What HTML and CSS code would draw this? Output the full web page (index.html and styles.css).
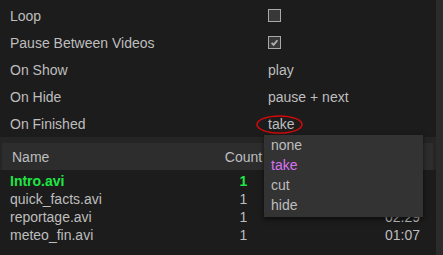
FILE: index.html
```html
<!DOCTYPE html>
<html lang="en">
<head>
    <meta charset="UTF-8">
    <title>Playlist Settings</title>
    <link rel="stylesheet" href="styles.css">
</head>
<body>
    <div class="main">
        <!--settings-->
        <div class="settings">
            <div class="row"><span class="label">Loop</span><span class="value"><span class="check"></span></span></div>
            <div class="row"><span class="label">Pause Between Videos</span><span class="value"><span class="check on">
                <svg viewBox="0 0 13 13"><path d="M3.6 6.8 L5.6 8.8 L9.4 4.2" /></svg>
            </span></span></div>
            <div class="row"><span class="label">On Show</span><span class="value">play</span></div>
            <div class="row"><span class="label">On Hide</span><span class="value">pause + next</span></div>
            <div class="row"><span class="label">On Finished</span><span class="value">take</span></div>
        </div>

        <!--playlist-->
        <div class="playlist">
            <div class="head">
                <span>Name</span><span class="count">Count</span><span></span>
            </div>
            <div class="items">
                <div class="item active"><span>Intro.avi</span><span class="count">1</span><span class="time"></span></div>
                <div class="item"><span>quick_facts.avi</span><span class="count">1</span><span class="time"></span></div>
                <div class="item"><span>reportage.avi</span><span class="count">1</span><span class="time">02:29</span></div>
                <div class="item"><span>meteo_fin.avi</span><span class="count">1</span><span class="time">01:07</span></div>
            </div>
        </div>
    </div>
    <div class="scroll"></div>

    <!--highlight round the current value-->
    <svg class="mark" viewBox="0 0 47 19">
        <ellipse cx="23.5" cy="9.5" rx="22.5" ry="8.6"></ellipse>
    </svg>

    <!--open dropdown-->
    <ul class="menu">
        <li>none</li>
        <li class="sel">take</li>
        <li>cut</li>
        <li>hide</li>
    </ul>
</body>
</html>
```

FILE: styles.css
```css
html,
body {
    margin: 0;
    padding: 0;
    width: 443px;
    height: 255px;
    overflow: hidden;
}

body {
    position: relative;
    display: flex;
    background: #2a2a2a;
    font-family: "Liberation Sans", Arial, sans-serif;
    font-size: 14px;
    color: #bebebe;
}

.main {
    width: 436px;
    display: flex;
    flex-direction: column;
}

.scroll {
    width: 7px;
    background: #2b2b2b;
}

/*settings*/
.settings {
    height: 135px;
    padding-top: 2px;
    background: #1c1c1c;
}

.row {
    display: grid;
    grid-template-columns: 258px 1fr;
    align-items: center;
    height: 27px;
    padding-left: 10px;
}

.check {
    display: block;
    width: 11px;
    height: 11px;
    border: 1px solid #a9a9a9;
    background: #383838;
}

.check svg {
    display: block;
    width: 11px;
    height: 11px;
    margin: -1px 0 0 -1px;
    width: 13px;
    height: 13px;
}

.check path {
    fill: none;
    stroke: #b0b0b0;
    stroke-width: 1.8;
}

/*playlist*/
.playlist {
    flex: 1;
    display: flex;
    flex-direction: column;
    background: #252525;
    padding-top: 6px;
}

.head {
    display: grid;
    grid-template-columns: 212px 39px 1fr;
    align-items: center;
    height: 27px;
    margin: 0 3px 0 2px;
    padding-left: 10px;
    background: #2d2d2d;
}

.count {
    text-align: center;
}

.items {
    flex: 1;
    background: #1c1c1c;
    padding-top: 2px;
}

.item {
    display: grid;
    grid-template-columns: 214px 39px 1fr;
    align-items: center;
    height: 18px;
    padding: 0 16px 0 10px;
}

.item.active {
    color: #1ee645;
    font-weight: bold;
}

.time {
    text-align: right;
}

/*overlays*/
.mark {
    position: absolute;
    left: 256px;
    top: 115px;
    width: 47px;
    height: 19px;
}

.mark ellipse {
    fill: none;
    stroke: #d20a0a;
    stroke-width: 1.5;
}

.menu {
    position: absolute;
    left: 264px;
    top: 135px;
    width: 159px;
    margin: 0;
    padding: 0 0 2px;
    list-style: none;
    background: #333333;
    box-shadow: 0 2px 5px rgba(0, 0, 0, .6);
}

.menu li {
    height: 20px;
    line-height: 20px;
    padding-left: 7px;
}

.menu .sel {
    color: #d774f3;
}
```
